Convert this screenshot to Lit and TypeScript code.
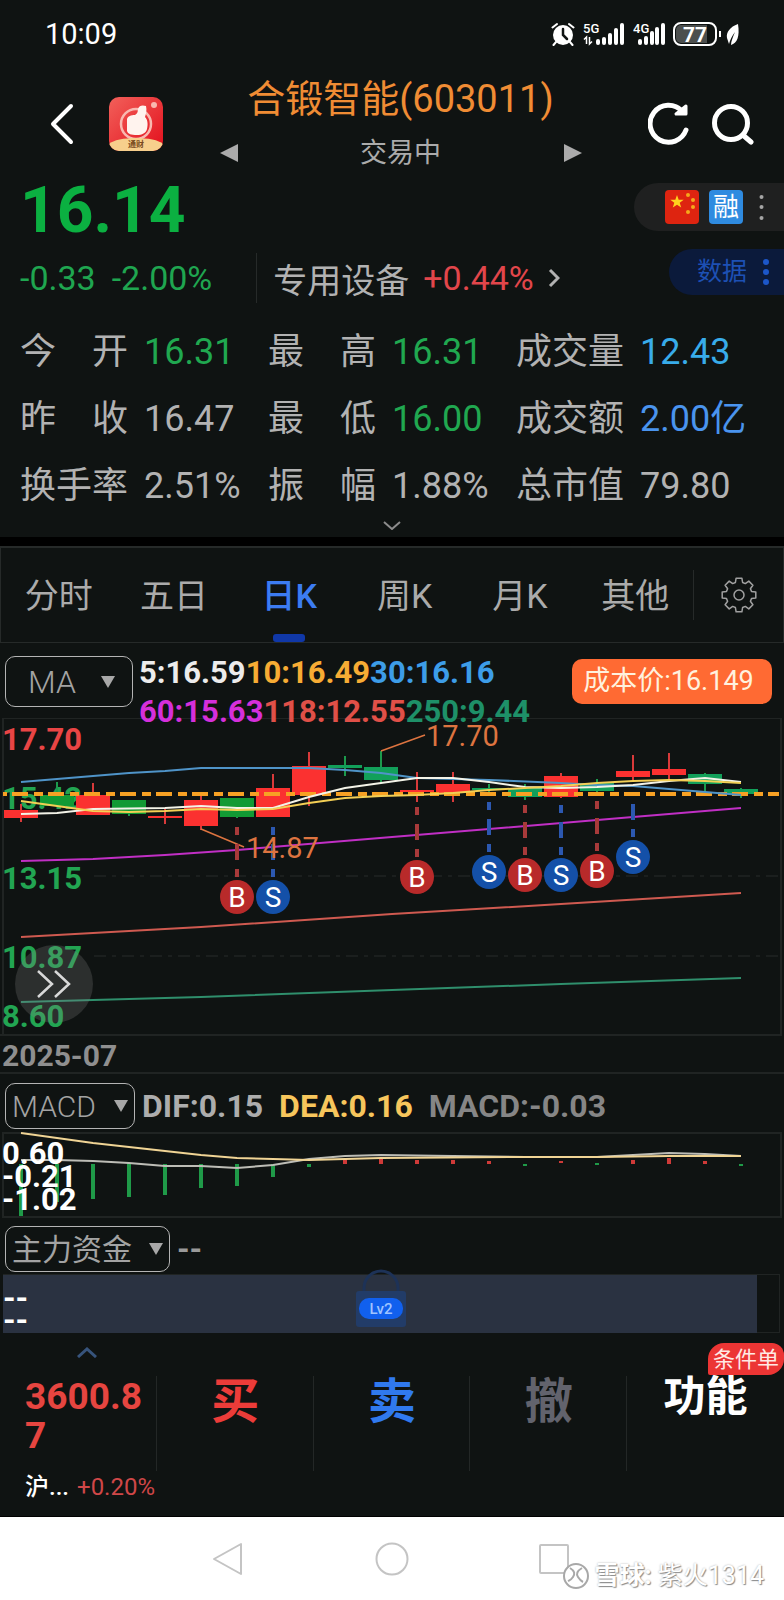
import { LitElement, html, svg, css } from "lit";
import { customElement, state } from "lit/decorators.js";
import { classMap } from "lit/directives/class-map.js";

type Candle = { up: boolean; top: number; bottom: number; high: number; low: number };
type Mark = { kind: "B" | "S"; day: number; y: number; from: number };

const FIRST_X = 21;
const STEP = 36;
const dayX = (i: number) => FIRST_X + STEP * i;

const c = (up: boolean, top: number, bottom: number, high: number, low: number): Candle => ({ up, top, bottom, high, low });

const CANDLES: Candle[] = [
  c(true, 810, 818, 804, 822), c(false, 795, 806, 782, 806), c(true, 795, 815, 783, 815),
  c(false, 800, 814, 800, 816), c(true, 816, 818, 808, 824), c(true, 800, 826, 796, 830),
  c(false, 798, 817, 798, 818), c(true, 788, 817, 774, 817), c(true, 766, 795, 752, 806),
  c(false, 765, 768, 756, 776), c(false, 767, 780, 751, 782), c(true, 790, 792, 772, 802),
  c(true, 784, 793, 772, 802), c(false, 788, 790, 784, 796), c(false, 788, 797, 784, 800),
  c(true, 776, 797, 773, 798), c(false, 783, 791, 779, 796), c(true, 771, 777, 755, 780),
  c(true, 769, 775, 753, 780), c(false, 774, 784, 773, 792), c(false, 789, 794, 788, 798),
];

const MARKS: Mark[] = [
  { kind: "B", day: 6, y: 897, from: 820 }, { kind: "S", day: 7, y: 897, from: 820 },
  { kind: "B", day: 11, y: 877, from: 798 }, { kind: "S", day: 13, y: 872, from: 798 },
  { kind: "B", day: 14, y: 875, from: 798 }, { kind: "S", day: 15, y: 875, from: 798 },
  { kind: "B", day: 16, y: 871, from: 798 }, { kind: "S", day: 17, y: 857, from: 798 },
];

const MA_LINES: { color: string; points: string }[] = [
  { color: "#4f94c8", points: "21,782 57,779 93,776 129,773 165,771 201,768 309,768 345,770 381,773 417,778 489,780 561,783 597,785 633,786 669,789 705,792 741,795" },
  { color: "#f3f3e8", points: "21,814 57,813 93,809 165,808 201,806 237,808 273,808 309,797 345,788 381,783 417,778 453,778 489,782 525,787 561,788 597,787 633,785 669,781 705,778 741,782" },
  { color: "#f3cf55", points: "21,801 57,806 93,811 129,812 165,811 201,809 237,810 273,809 309,803 345,798 381,796 417,795 453,793 489,790 525,788 561,786 597,783 633,781 669,780 705,781 741,783" },
  { color: "#c02fc4", points: "21,861 57,860 93,859 165,855 237,850 392,837 489,829 633,817 741,808" },
  { color: "#cf5a50", points: "21,937 201,927 392,914 561,904 741,893" },
  { color: "#2f8f6c", points: "21,1002 201,997 392,990 561,984 741,978" },
];

const MACD_BARS: [number, number, boolean][] = [
  [1164, 1216, false], [1164, 1202, false], [1164, 1199, false], [1163, 1197, false],
  [1164, 1195, false], [1164, 1188, false], [1164, 1186, false], [1164, 1177, false],
  [1164, 1167, false], [1159, 1164, true], [1159, 1164, true], [1160, 1164, true],
  [1160, 1164, true], [1161, 1164, true], [1164, 1166, false], [1161, 1163, true],
  [1163, 1165, false], [1160, 1164, true], [1158, 1164, true], [1161, 1164, true], [1164, 1166, false],
];

const STATS: [string, string, string][] = [
  ["今 开", "16.31", "green"], ["最 高", "16.31", "green"], ["成交量", "12.43", "cyan"],
  ["昨 收", "16.47", "plain"], ["最 低", "16.00", "green"], ["成交额", "2.00亿", "blue"],
  ["换手率", "2.51%", "plain"], ["振 幅", "1.88%", "plain"], ["总市值", "79.80", "plain"],
];

// Outline of a cog with eight teeth around (18, 18).
const COG = Array.from({ length: 8 }, (_, tooth) => {
  const mid = (tooth * Math.PI) / 4;
  return ([[-0.28, 13], [-0.17, 17], [0.17, 17], [0.28, 13]] as const)
    .map(([turn, r]) => `${(18 + r * Math.sin(mid + turn)).toFixed(1)},${(18 - r * Math.cos(mid + turn)).toFixed(1)}`)
    .join(" ");
}).join(" ");

const shared = css`
  :host { display: block; }
  * { box-sizing: border-box; }
  button {
    font: inherit; color: inherit; background: none; border: 0; padding: 0; margin: 0; cursor: pointer;
  }
  svg { display: block; flex: none; }
`;

@customElement("status-bar")
export class StatusBar extends LitElement {
  static styles = [shared, css`
    .bar { display: flex; align-items: center; justify-content: space-between; height: 67px; padding: 0 44px 0 45px; color: #fff; }
    .time { font-size: 29px; line-height: 66px; font-weight: 400; }
    .icons { display: flex; align-items: center; gap: 8px; }
    .net { font-size: 13px; font-weight: 500; fill: #fff; }
    .level { font-size: 21px; font-weight: 700; fill: #fff; }
  `];
  render() {
    return html`
      <div class="bar">
        <span class="time">10:09</span>
        <span class="icons">
          <svg width="24" height="24" viewBox="0 0 24 24" fill="none" stroke="#fff" stroke-width="2" stroke-linecap="round">
            <circle cx="12" cy="13" r="10" fill="#fff" stroke="none"/>
            <path d="M1.5 5.5 6 2M22.500 5.500 18 2M5 20l-2.500 3M19 20l2.500 3"/>
            <path d="M12 7v6l4 4" stroke="#101413" stroke-width="2.500"/>
          </svg>
          <svg width="42" height="26" viewBox="0 0 42 26" fill="#fff">
            <text class="net" x="0" y="12">5G</text>
            <path d="M3.500 23V16L1 18.500M6.500 16v7l2.500-2.500" fill="none" stroke="#fff" stroke-width="1.500"/>
            <rect x="13" y="18" width="4" height="6" rx="2"/><rect x="19" y="16" width="4" height="8" rx="2"/>
            <rect x="25" y="12" width="4" height="12" rx="2"/><rect x="31" y="7" width="4" height="17" rx="2"/>
            <rect x="37" y="2" width="4" height="22" rx="2"/>
          </svg>
          <svg width="32" height="26" viewBox="0 0 32 26" fill="#fff">
            <text class="net" x="0" y="12">4G</text>
            <rect x="5" y="18" width="4" height="6" rx="2"/><rect x="11" y="15" width="4" height="9" rx="2"/>
            <rect x="17" y="10" width="4" height="14" rx="2"/><rect x="22" y="6" width="4" height="18" rx="2"/>
            <rect x="28" y="2" width="4" height="22" rx="2"/>
          </svg>
          <svg width="67" height="26" viewBox="0 0 67 26">
            <rect x="1" y="2" width="42" height="22" rx="7" fill="none" stroke="#fff" stroke-width="2"/>
            <path d="M8 4h26v18H8a5 5 0 0 1-5-5V9a5 5 0 0 1 5-5z" fill="#4c4f4e"/>
            <text class="level" x="22" y="21" text-anchor="middle">77</text>
            <path d="M47 10v6" stroke="#fff" stroke-width="2"/>
            <path d="M65 3c-8 3-12 8-11 14l2 6c1-4 3-8 6-12-2 5-4 9-4 13 6-2 9-8 7-21z" fill="#fff"/>
          </svg>
        </span>
      </div>`;
  }
}

@customElement("stock-header")
export class StockHeader extends LitElement {
  static styles = [shared, css`
    .head { display: flex; align-items: center; height: 114px; padding: 0 30px 0 50px; }
    .side { display: flex; align-items: center; gap: 22px; }
    .side.left { gap: 35px; }
    .centre { flex: 1; padding: 6px 10px 0 0; display: flex; flex-direction: column; align-items: center; }
    .title { margin: 0; font-size: 38px; line-height: 52px; font-weight: 400; color: #f08c34; }
    .sub { display: flex; align-items: center; justify-content: space-between; width: 362px; font-size: 27px; line-height: 56px; color: #ababab; }
    .logo { font-size: 8px; font-weight: 700; fill: #7a4a20; }
  `];
  render() {
    return html`
      <header class="head">
        <div class="side left">
          <button aria-label="返回">
            <svg width="24" height="44" viewBox="0 0 24 44" fill="none" stroke="#fff" stroke-width="4" stroke-linecap="round" stroke-linejoin="round"><path d="M21 4 3 22l18 18"/></svg>
          </button>
          <svg width="54" height="54" viewBox="0 0 54 54">
            <defs>
              <linearGradient id="r" x1="0" y1="0" x2="1" y2="1"><stop offset="0" stop-color="#f2605a"/><stop offset="1" stop-color="#e30f1c"/></linearGradient>
              <clipPath id="k"><rect width="54" height="54" rx="10"/></clipPath>
            </defs>
            <g clip-path="url(#k)">
              <rect width="54" height="54" fill="url(#r)"/>
              <circle cx="27" cy="27" r="15" fill="none" stroke="#f9b8b0" stroke-width="2.500"/>
              <path d="M18 22c1-3 4-4 8-4 2-1 3-3 3-6 1-4 5-4 8-3 1 4 0 8-1 11 3 3 3 8 2 12-1 4-5 6-10 6-6 0-9-1-10-4z" fill="#fff3ee"/>
              <circle cx="45" cy="8" r="3" fill="#f9b8b0"/>
              <path d="M0 47c8-8 46-8 54 0v7H0z" fill="#f7cf8c"/>
            </g>
            <text class="logo" x="27" y="50" text-anchor="middle">通财</text>
          </svg>
        </div>
        <div class="centre">
          <h1 class="title">合锻智能(603011)</h1>
          <div class="sub">
            <button aria-label="上一只"><svg width="18" height="18" viewBox="0 0 18 18"><path d="M0 9 18 0v18z" fill="#ababab"/></svg></button>
            <span>交易中</span>
            <button aria-label="下一只"><svg width="18" height="18" viewBox="0 0 18 18"><path d="M18 9 0 0v18z" fill="#ababab"/></svg></button>
          </div>
        </div>
        <div class="side">
          <button aria-label="刷新">
            <svg width="42" height="44" viewBox="0 0 42 44" fill="none" stroke="#fff" stroke-width="5" stroke-linecap="round"><path d="M38 28A18.500 18.500 0 1 1 34 9"/><path d="M28 12h10V4z" fill="#fff" stroke-width="3" stroke-linejoin="round"/></svg>
          </button>
          <button aria-label="搜索">
            <svg width="42" height="44" viewBox="0 0 42 44" fill="none" stroke="#fff" stroke-width="5" stroke-linecap="round"><circle cx="19" cy="21" r="16.500"/><path d="m32 34 7 6"/></svg>
          </button>
        </div>
      </header>`;
  }
}

@customElement("quote-panel")
export class QuotePanel extends LitElement {
  static styles = [shared, css`
    .quote { display: flex; justify-content: space-between; height: 138px; }
    .main { padding-left: 20px; }
    .price { font-size: 64px; line-height: 60px; font-weight: 700; color: #0bb041; }
    .row { display: flex; align-items: center; height: 74px; font-size: 34px; color: #b2b2b2; white-space: nowrap; }
    .delta { color: #1fa650; margin-right: 16px; }
    .rule { width: 1px; height: 50px; background: #262a29; margin: 0 16px 0 28px; }
    .sector { display: flex; align-items: center; gap: 14px; }
    .gain { color: #e2464b; }
    .pills { display: flex; flex-direction: column; align-items: flex-end; gap: 18px; padding-top: 2px; }
    .pill { display: flex; align-items: center; justify-content: flex-end; }
    .pill.tags { width: 150px; height: 48px; gap: 10px; padding-right: 20px; border-radius: 24px 0 0 24px; background: #1f2020; }
    .pill.data { width: 115px; height: 46px; gap: 16px; padding-right: 15px; border-radius: 23px 0 0 23px; background: #0b1a3b; color: #1d50b4; font-size: 25px; line-height: 44px; }
    .margin { width: 34px; height: 34px; border-radius: 4px; background: #2f8be0; color: #fff; font-size: 26px; line-height: 34px; text-align: center; }
    .dots { margin-left: 6px; }
    .data .dots { margin-left: 0; }
    .stats { display: grid; grid-template-columns: repeat(6, 1fr); padding: 0 20px; margin: 0; font-size: 36px; line-height: 67px; color: #b2b2b2; }
    .stat { display: grid; grid-template-columns: subgrid; grid-column: span 2; }
    .label { width: 108px; text-align: justify; text-align-last: justify; }
    .value { margin: 0; white-space: nowrap; }
    .green { color: #20a850; }
    .cyan { color: #38acea; }
    .blue { color: #4a94ee; }
    .more { display: flex; width: 100%; height: 17px; justify-content: center; align-items: flex-start; }
  `];
  render() {
    return html`
      <section>
        <div class="quote">
          <div class="main">
            <div class="price">16.14</div>
            <div class="row">
              <span class="delta">-0.33</span><span class="delta">-2.00%</span>
              <span class="rule"></span>
              <button class="sector">
                <span>专用设备</span><span class="gain">+0.44%</span>
                <svg width="12" height="20" viewBox="0 0 12 20" fill="none" stroke="#b2b2b2" stroke-width="3"><path d="m2 2 8 8-8 8"/></svg>
              </button>
            </div>
          </div>
          <div class="pills">
            <div class="pill tags">
              <svg width="34" height="34" viewBox="0 0 34 34">
                <rect width="34" height="34" rx="4" fill="#de2410"/>
                <path d="m12 5 1.700 4.700 5 .1-4 3 1.500 4.800-4.200-2.900-4.200 2.900 1.500-4.800-4-3 5-.1z" fill="#ffd21e"/>
                <g fill="#f5a81c"><circle cx="23" cy="5" r="2"/><circle cx="28" cy="10" r="2"/><circle cx="28" cy="17" r="2"/><circle cx="23" cy="22" r="2"/></g>
              </svg>
              <span class="margin">融</span>
              <svg class="dots" width="5" height="28" viewBox="0 0 5 28" fill="#a5a5a5"><circle cx="2.500" cy="4" r="2"/><circle cx="2.500" cy="14" r="2"/><circle cx="2.500" cy="25" r="2"/></svg>
            </div>
            <button class="pill data">
              <span>数据</span>
              <svg class="dots" width="6" height="28" viewBox="0 0 6 28" fill="#1c56c8"><circle cx="3" cy="4" r="3"/><circle cx="3" cy="14" r="3"/><circle cx="3" cy="24" r="3"/></svg>
            </button>
          </div>
        </div>
        <dl class="stats">
          ${STATS.map(([label, value, tone]) => html`
            <div class="stat"><dt class="label">${label}</dt><dd class="value ${tone}">${value}</dd></div>`)}
        </dl>
        <button class="more" aria-label="展开">
          <svg width="18" height="10" viewBox="0 0 18 10" fill="none" stroke="#8c8c8c" stroke-width="2"><path d="m1 2 8 7 8-7"/></svg>
        </button>
      </section>`;
  }
}

@customElement("period-tabs")
export class PeriodTabs extends LitElement {
  @state() private current = 2;
  static styles = [shared, css`
    .tabs { display: flex; align-items: stretch; height: 97px; border: 1px solid #262a29; border-top-width: 2px; color: #ababab; }
    .tab { flex: 1; padding-top: 10px; font-size: 34px; line-height: 76px; display: flex; flex-direction: column; align-items: center; }
    .tab::after { content: ""; width: 32px; height: 8px; border-radius: 3px; }
    .on { color: #3c7cf2; font-weight: 500; }
    .on::after { background: #1038a8; }
    .set { width: 90px; display: flex; align-items: center; }
    .set::before { content: ""; width: 1px; height: 50px; background: #262a29; margin-right: 27px; }
  `];
  render() {
    return html`
      <nav class="tabs">
        ${["分时", "五日", "日K", "周K", "月K", "其他"].map((name, i) => html`
          <button class=${classMap({ tab: true, on: i === this.current })} @click=${() => (this.current = i)}>${name}</button>`)}
        <button class="set" aria-label="设置">
          <svg width="36" height="36" viewBox="0 0 36 36" fill="none" stroke="#a0a0a0" stroke-width="1.500" stroke-linejoin="round">
            <polygon points=${COG}/>
            <circle cx="18" cy="18" r="5"/>
          </svg>
        </button>
      </nav>`;
  }
}

@customElement("kline-panel")
export class KlinePanel extends LitElement {
  static styles = [shared, css`
    .picker { display: grid; flex: none; align-items: center; }
    .picker > * { grid-area: 1 / 1; }
    .picker select {
      appearance: none; width: 100%; height: 100%; margin: 0; border: 1px solid #b4b4b4; border-radius: 10px;
      background: transparent; color: #a3a3a3; font: inherit; font-size: 30px; font-weight: 300; padding: 0 6px; outline: none;
    }
    .picker svg { justify-self: end; margin-right: 7px; pointer-events: none; }
    .picker.ma { width: 128px; height: 51px; margin-top: 3px; }
    .picker.ma select { font-size: 32px; padding-left: 22px; }
    .picker.ma svg { margin-right: 18px; }
    .picker.macd { width: 130px; height: 46px; }
    .picker.fund { width: 165px; height: 46px; }
    .picker.fund select { font-weight: 400; }
    .top { display: flex; align-items: flex-start; padding: 10px 12px 0 5px; position: relative; z-index: 1; margin-bottom: -13px; }
    .legend { flex: 1; padding-left: 6px; font-size: 31px; line-height: 39px; font-weight: 700; white-space: nowrap; }
    .line { display: flex; }
    .cost { width: 200px; height: 45px; margin-top: 6px; border-radius: 10px; background: #ff6a33; color: #fff1de; font-size: 27px; line-height: 45px; text-align: center; padding-right: 7px; }
    .white { color: #ececec; } .orange { color: #f7ac34; } .sky { color: #3d9de8; }
    .violet { color: #d52fdb; } .coral { color: #e05048; } .teal { color: #1e9068; }
    .chart { position: relative; }
    .plot { width: 100%; height: auto; }
    .axis { font-size: 31px; font-weight: 700; }
    .note { font-size: 29px; fill: #dd7440; }
    .flag { font-size: 28px; fill: #fff; }
    .jump { position: absolute; left: 15px; bottom: 13px; width: 78px; height: 78px; border-radius: 50%; background: rgba(130, 130, 130, 0.25); display: grid; place-items: center; }
    .date { font-size: 30px; line-height: 39px; height: 38px; font-weight: 700; color: #8f8f8f; padding-left: 2px; border-bottom: 2px solid #202423; }
    .strip { display: flex; align-items: center; padding: 0 5px; font-size: 32px; font-weight: 700; white-space: nowrap; }
    .strip.s1 { height: 58px; gap: 16px; padding-top: 9px; padding-bottom: 3px; }
    .strip.s2 { height: 56px; padding-top: 8px; padding-bottom: 2px; gap: 7px; color: #9a9a9a; }
    .strip.s1 .picker { margin-right: -9px; }
    .grey { color: #adadad; } .amber { color: #f7c65c; } .dim { color: #868686; }
    .fundbox { position: relative; height: 59px; margin: 0 4px 0 3px; border: 1px solid #202423; border-left: 0; padding-right: 22px; }
    .fill { height: 58px; padding-top: 12px; background: #2a3241; color: #fff; font-size: 32px; line-height: 22px; font-weight: 700; }
    .lock { position: absolute; left: calc(50% - 36px); top: -8px; }
    .lv { font-size: 15px; font-weight: 500; fill: #9fc4ff; }
  `];

  private arrow() {
    return html`<svg width="14" height="14" viewBox="0 0 14 14"><path d="M0 1h14L7 13z" fill="#a8a8a8"/></svg>`;
  }

  private candle(k: Candle, i: number) {
    const x = dayX(i);
    const color = k.up ? "#fb3130" : i < 9 ? "#129a34" : "#12a05a";
    return svg`<path d="M${x} ${k.high}V${k.low}" stroke=${k.up ? "#d83a3a" : "#1c9a4c"} stroke-width="2"/>
      <rect x=${x - 17} y=${k.top} width="34" height=${k.bottom - k.top} fill=${color}/>`;
  }

  private mark(m: Mark) {
    const x = dayX(m.day);
    const buy = m.kind === "B";
    return svg`<path d="M${x} ${m.y - 20}V${m.from}" stroke=${buy ? "#a83a3a" : "#2c58b0"} stroke-width="4" stroke-dasharray="8 9 16 9"/>
      <circle cx=${x} cy=${m.y} r="17" fill=${buy ? "#b82a2a" : "#1450a8"}/>
      <text class="flag" x=${x} y=${m.y + 10} text-anchor="middle">${m.kind}</text>`;
  }

  render() {
    return html`
      <section>
        <div class="top">
          <label class="picker ma"><select aria-label="主图指标"><option>MA</option></select>${this.arrow()}</label>
          <div class="legend">
            <div class="line"><span class="white">5:16.59</span><span class="orange">10:16.49</span><span class="sky">30:16.16</span></div>
            <div class="line"><span class="violet">60:15.63</span><span class="coral">118:12.55</span><span class="teal">250:9.44</span></div>
          </div>
          <div class="cost">成本价:16.149</div>
        </div>
        <div class="chart">
          <svg class="plot" viewBox="0 718 784 318">
            <g fill="none" stroke="#202423" stroke-width="2">
              <path d="M3 1036V718H781V1036"/><path d="M0 1035H781"/>
              <path d="M94 876H778M94 956H778" stroke-dasharray="12 6 4 6" stroke-width="1.500"/>
            </g>
            <g class="axis" fill="#22a552">
              <text x="2" y="750" fill="#e94545">17.70</text><text x="2" y="809">15.42</text>
              <text x="2" y="889">13.15</text><text x="2" y="968">10.87</text><text x="2" y="1027">8.60</text>
            </g>
            ${CANDLES.map((k, i) => this.candle(k, i))}
            <path d="M3 794H779" stroke="#f7a124" stroke-width="4" stroke-dasharray="4 5 16 6 5 0"/>
            ${MA_LINES.map((l) => svg`<polyline points=${l.points} fill="none" stroke=${l.color} stroke-width="2"/>`)}
            <path d="M381 751 425 735M201 829 244 847" fill="none" stroke="#dd7440" stroke-width="1.500"/>
            ${MARKS.map((m) => this.mark(m))}
            <text class="note" x="426" y="746">17.70</text>
            <text class="note" x="246" y="858">14.87</text>
          </svg>
          <button class="jump" aria-label="展开图表">
            <svg width="34" height="28" viewBox="0 0 34 28" fill="none" stroke="#d8d8d8" stroke-width="2.500"><path d="m1 1 14 13L1 27M18 1l14 13-14 13"/></svg>
          </button>
        </div>
        <div class="date">2025-07</div>
        <div class="strip s1">
          <label class="picker macd"><select aria-label="副图指标"><option>MACD</option></select>${this.arrow()}</label>
          <span class="grey">DIF:0.15</span><span class="amber">DEA:0.16</span><span class="dim">MACD:-0.03</span>
        </div>
        <svg class="plot" viewBox="0 1132 784 86">
          <path d="M3 1217V1133H781V1217z" fill="none" stroke="#202423" stroke-width="2"/>
          ${MACD_BARS.map(([a, b, up], i) => svg`<rect x=${dayX(i) - 2} y=${a} width="4" height=${b - a} fill=${up ? "#cf3a38" : "#1f9a48"}/>`)}
          <polyline points="21,1160 57,1160 93,1161 129,1163 165,1166 201,1166 237,1168 273,1165 309,1159 345,1156 381,1155 453,1156 525,1157 597,1157 633,1155 669,1153 705,1154 741,1156" fill="none" stroke="#bdbdb6" stroke-width="2"/>
          <polyline points="21,1133 57,1138 93,1143 129,1147 165,1151 201,1155 237,1158 273,1159 309,1160 345,1159 381,1158 525,1157 597,1157 669,1156 741,1156" fill="none" stroke="#f0d495" stroke-width="2"/>
          <g class="axis" fill="#fff"><text x="2" y="1164">0.60</text><text x="2" y="1187">-0.21</text><text x="2" y="1210">-1.02</text></g>
        </svg>
        <div class="strip s2">
          <label class="picker fund"><select aria-label="资金指标"><option>主力资金</option></select>${this.arrow()}</label>
          <span>--</span>
        </div>
        <div class="fundbox">
          <div class="fill"><div>--</div><div>--</div></div>
          <svg class="lock" width="52" height="66" viewBox="0 0 52 66">
            <path d="M9 24v-3a17 17 0 0 1 34 0v3" fill="none" stroke="#1d3257" stroke-width="3"/>
            <rect x="1" y="24" width="50" height="36" rx="3" fill="#223c68"/>
            <rect x="4" y="31" width="44" height="21" rx="10" fill="#1160ee"/>
            <text class="lv" x="26" y="47" text-anchor="middle">Lv2</text>
          </svg>
        </div>
      </section>`;
  }
}

@customElement("trade-bar")
export class TradeBar extends LitElement {
  static styles = [shared, css`
    .bar { display: grid; grid-template-columns: repeat(5, 1fr); height: 184px; position: relative; border-bottom: 1px solid #000; }
    .cell { display: flex; flex-direction: column; align-items: center; padding-top: 37px; font-weight: 700; font-size: 48px; line-height: 64px; background: linear-gradient(#232726, #232726) right 43px / 1px 95px no-repeat; }
    .cell.buy { color: #ec3c39; } .cell.sell { color: #3079ee; } .cell.undo { color: #62636d; }
    .cell.menu { color: #fff; font-size: 42px; line-height: 54px; background: none; }
    .cell.index { padding: 10px 0 0 25px; align-items: flex-start; text-align: left; }
    .up { align-self: center; margin: 4px 0 19px -8px; }
    .points { width: 118px; font-size: 37px; line-height: 39px; color: #e64540; overflow-wrap: anywhere; }
    .foot { display: flex; gap: 8px; padding-top: 14px; font-size: 24px; line-height: 36px; font-weight: 400; color: #fff; white-space: nowrap; }
    .foot b { font-weight: 500; }
    .foot .pct { color: #cf4748; }
    .badge { position: absolute; right: 0; top: 10px; height: 32px; padding: 0 5px; border-radius: 16px 12px 16px 2px; background: #ec3534; color: #ffe9e4; font-size: 22px; line-height: 33px; }
  `];
  render() {
    return html`
      <footer class="bar">
        <button class="cell index">
          <svg class="up" width="20" height="11" viewBox="0 0 20 11" fill="none" stroke="#37547c" stroke-width="3"><path d="m1 10 9-8 9 8"/></svg>
          <span class="points">3600.87</span>
          <span class="foot"><b>沪...</b><span class="pct">+0.20%</span></span>
        </button>
        <button class="cell buy">买</button>
        <button class="cell sell">卖</button>
        <button class="cell undo">撤</button>
        <button class="cell menu">功能</button>
        <span class="badge">条件单</span>
      </footer>`;
  }
}

@customElement("system-nav")
export class SystemNav extends LitElement {
  static styles = [shared, css`
    .nav { position: relative; height: 83px; background: #fff; display: flex; justify-content: center; gap: 130px; padding-top: 25px; align-items: flex-start; }
    .stamp { position: absolute; right: 20px; bottom: 6px; display: flex; align-items: center; gap: 5px; font-size: 25px; line-height: 36px; color: #fff; text-shadow: 1px 1px 1px #8a8a8a, 0 0 2px #b0b0b0; }
    .stamp b { font-weight: 700; }
  `];
  render() {
    return html`
      <nav class="nav">
        <button aria-label="后退"><svg width="34" height="34" viewBox="0 0 34 34" fill="none" stroke="#c4c4c4" stroke-width="2" stroke-linejoin="round"><path d="M3 17 30 2v30z"/></svg></button>
        <button aria-label="主屏"><svg width="34" height="34" viewBox="0 0 34 34" fill="none" stroke="#c4c4c4" stroke-width="2"><circle cx="17" cy="17" r="15.500"/></svg></button>
        <button aria-label="任务"><svg width="34" height="34" viewBox="0 0 34 34" fill="none" stroke="#c4c4c4" stroke-width="2"><rect x="1" y="3" width="28" height="28" rx="1"/></svg></button>
        <div class="stamp">
          <svg width="28" height="28" viewBox="0 0 28 28" fill="none">
            <circle cx="14" cy="14" r="12" fill="#fff" stroke="#a8a8a8" stroke-width="2"/>
            <path d="M8 6c5 3 5 6 3 9s-3 3-5 4M20 6c-5 3-6 6-4 9s3 4 5 5" stroke="#a8a8a8" stroke-width="2"/>
          </svg>
          <span><b>雪球:</b> 紫火1314</span>
        </div>
      </nav>`;
  }
}

@customElement("app-root")
export class AppRoot extends LitElement {
  static styles = [shared, css`
    :host { background: #0f1312; font-family: "Roboto", "Noto Sans CJK SC", sans-serif; overflow: hidden; }
    .band { height: 9px; background: #000; }
  `];
  render() {
    return html`
      <status-bar></status-bar>
      <stock-header></stock-header>
      <quote-panel></quote-panel>
      <div class="band"></div>
      <period-tabs></period-tabs>
      <kline-panel></kline-panel>
      <trade-bar></trade-bar>
      <system-nav></system-nav>`;
  }
}
